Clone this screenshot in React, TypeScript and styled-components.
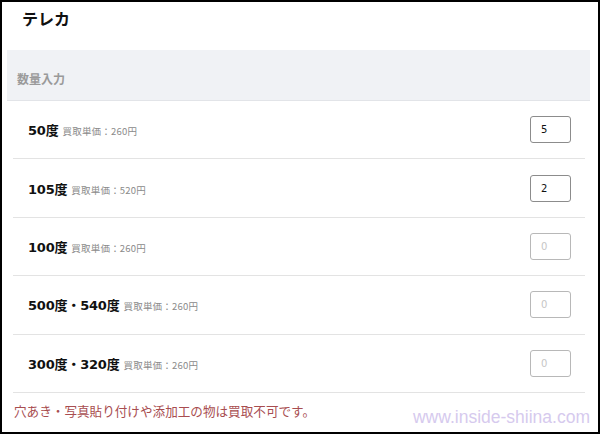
import React from 'react'
import styled, { createGlobalStyle } from 'styled-components'

const GlobalStyle = createGlobalStyle`
  html, body {
    margin: 0;
    padding: 0;
    background: #fff;
  }
  body {
    font-family: "DejaVu Sans", "Noto Sans CJK JP", sans-serif;
  }
`

const Frame = styled.div`
  position: relative;
  box-sizing: border-box;
  width: 600px;
  height: 434px;
  border: 2px solid #000;
  background: #fff;
  overflow: hidden;
`

const Title = styled.h1`
  margin: 0;
  padding: 5px 0 0 20px;
  height: 43px;
  font-family: "Noto Sans CJK JP", sans-serif;
  font-size: 16px;
  font-weight: 700;
  color: #111;
  line-height: 22px;
`

const SectionHead = styled.div`
  margin: 0 8px 0 5px;
  height: 51px;
  background: #f0f2f5;
  display: flex;
  align-items: flex-end;
  padding: 0 0 13px 10px;
  box-sizing: border-box;
  font-family: "Noto Sans CJK JP", sans-serif;
  font-size: 12px;
  font-weight: 700;
  color: #9a9a9a;
  border-bottom: 1px solid #e2e4e8;
`

const List = styled.div`
  margin: 0 13px 0 11px;
`

const Row = styled.div`
  display: flex;
  align-items: center;
  justify-content: space-between;
  height: 57.4px;
  padding: 0 14px 0 15px;
  border-bottom: 1px solid #e3e3e3;
`

const Label = styled.div`
  display: flex;
  align-items: baseline;
  gap: 4px;
`

const Name = styled.span`
  font-size: 13px;
  font-weight: 700;
  color: #111;
  letter-spacing: -0.2px;
`

const Price = styled.span`
  font-family: "Noto Sans CJK JP", sans-serif;
  font-size: 9.5px;
  color: #8a8a8a;
  letter-spacing: 0.2px;
`

const Qty = styled.input<{ $empty?: boolean }>`
  box-sizing: border-box;
  width: 41px;
  height: 27px;
  padding: 0 0 0 10px;
  border: 1px solid ${p => (p.$empty ? '#b8b8b8' : '#8c8c8c')};
  border-radius: 3px;
  font-family: "DejaVu Sans", sans-serif;
  font-size: 10px;
  color: #111;
  background: #fff;
  outline: none;

  &::placeholder {
    color: #c6c6c6;
    opacity: 1;
  }
`

const Notice = styled.p`
  margin: 8px 0 0 12px;
  font-family: "Noto Sans CJK JP", sans-serif;
  font-size: 12.6px;
  color: #a84d50;
`

const Watermark = styled.div`
  position: absolute;
  right: 8px;
  bottom: 4px;
  font-family: "Liberation Sans", sans-serif;
  font-size: 17.5px;
  font-weight: 400;
  color: #d6caee;
`

const items = [
  { name: '50度', price: 260, qty: '5' },
  { name: '105度', price: 520, qty: '2' },
  { name: '100度', price: 260, qty: '' },
  { name: '500度・540度', price: 260, qty: '' },
  { name: '300度・320度', price: 260, qty: '' },
]

const App = () => {
  return (
    <>
      <GlobalStyle />
      <Frame>
        <Title>テレカ</Title>
        <SectionHead>数量入力</SectionHead>
        <List>
          {items.map(item => (
            <Row key={item.name}>
              <Label>
                <Name>{item.name}</Name>
                <Price>買取単価：{item.price}円</Price>
              </Label>
              <Qty
                $empty={!item.qty}
                defaultValue={item.qty}
                placeholder="0"
              />
            </Row>
          ))}
        </List>
        <Notice>穴あき・写真貼り付けや添加工の物は買取不可です。</Notice>
        <Watermark>www.inside-shiina.com</Watermark>
      </Frame>
    </>
  )
}

export default App
